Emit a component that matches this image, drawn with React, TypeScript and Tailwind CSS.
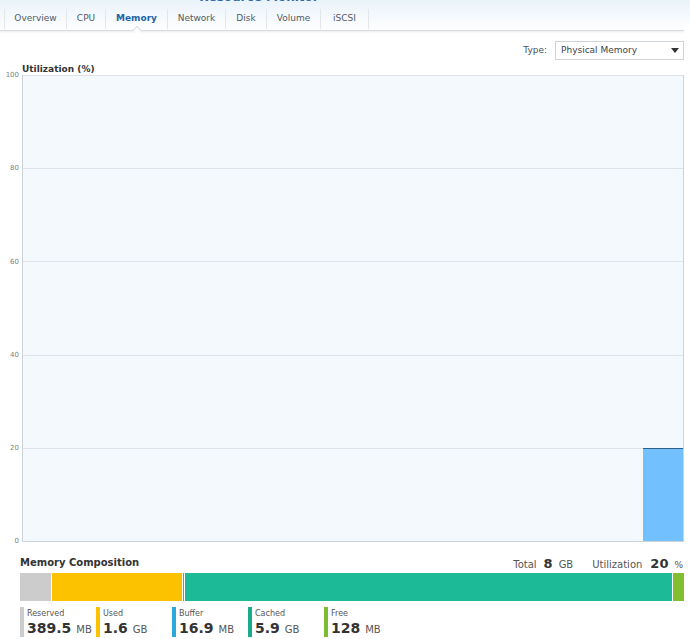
import React from "react";

const tabs = [
  { name: "Overview", w: "w-[63px]" },
  { name: "CPU", w: "w-[39px]" },
  { name: "Memory", w: "w-[62px]", active: true },
  { name: "Network", w: "w-[58px]" },
  { name: "Disk", w: "w-[41px]" },
  { name: "Volume", w: "w-[54px]" },
  { name: "iSCSI", w: "w-[48px]" },
];

const legend = [
  { label: "Reserved", value: "389.5", unit: "MB", color: "bg-[#cccccc]" },
  { label: "Used", value: "1.6", unit: "GB", color: "bg-[#fcc200]" },
  { label: "Buffer", value: "16.9", unit: "MB", color: "bg-[#2ea7dd]" },
  { label: "Cached", value: "5.9", unit: "GB", color: "bg-[#1aaa8c]" },
  { label: "Free", value: "128", unit: "MB", color: "bg-[#7ebd32]" },
];

const yLabels = [
  { v: "100", top: "top-[0px]" },
  { v: "80", top: "top-[93px]" },
  { v: "60", top: "top-[187px]" },
  { v: "40", top: "top-[280px]" },
  { v: "20", top: "top-[373px]" },
  { v: "0", top: "top-[466px]" },
];

export default function App() {
  return (
    <div className="w-[690px] h-[639px] overflow-hidden bg-white font-['DejaVu_Sans',sans-serif] text-[#4a4f55]">
      {/* header */}
      <div className="h-[31px] bg-gradient-to-b from-[#eaf2fa] to-white relative">
        <div className="h-[4px] overflow-hidden flex justify-center pr-[172px]">
          <div className="-mt-[10px] text-[12px] font-bold text-[#2a67a3] leading-[14px]">Resource Monitor</div>
        </div>
        <div className="flex pl-[4px] mt-[4px] h-[22px] items-center">
          {tabs.map((t, i) => (
            <div
              key={t.name}
              className={`${t.w} h-[20px] flex items-center justify-center text-[9px] border-r border-[#e3e7eb] ${i === 0 ? "border-l" : ""} ${t.active ? "text-[#1d64a6] font-bold" : "text-[#525a63]"}`}
            >
              {t.name}
            </div>
          ))}
        </div>
        <div className="absolute left-0 w-[684px] top-[30px] h-[1px] bg-[#d9dde1] shadow-[0_1px_2px_rgba(0,0,0,0.12)]" />
        <div className="absolute left-[134px] top-[27px] w-[6px] h-[6px] bg-white border-l border-t border-[#d9dde1] rotate-45" />
      </div>

      {/* type row */}
      <div className="flex justify-end items-center mt-[10px] pr-[6px] h-[19px]">
        <span className="text-[9px] text-[#4a4f55] mr-[8px]">Type:</span>
        <div className="w-[129px] h-[19px] border border-[#cfd4d9] bg-white flex items-center justify-between pl-[5px] pr-[4px]">
          <span className="text-[9px] text-[#3d434a]">Physical Memory</span>
          <svg width="8" height="5" viewBox="0 0 8 5"><path d="M0 0 L8 0 L4 5 Z" fill="#333" /></svg>
        </div>
      </div>

      {/* chart title */}
      <div className="pl-[22px] mt-[3px] h-[12px] text-[9px] font-bold text-[#333] leading-[12px]">Utilization (%)</div>

      {/* chart */}
      <div className="flex">
        <div className="w-[22px] relative h-[467px]">
          {yLabels.map((l) => (
            <div key={l.v} className={`absolute right-[3px] ${l.top} -translate-y-1/2 text-[7px] text-[#808080] leading-none`}>
              {l.v}
            </div>
          ))}
        </div>
        <div className="w-[662px] h-[467px] relative bg-[#f4f9fd] border-l border-b border-r border-[#cdd3d9] flex flex-col">
          {[0, 1, 2, 3, 4].map((i) => (
            <div key={i} className="h-[93.2px] border-t border-[#dde3e9]" />
          ))}
          <div className="absolute right-0 bottom-0 w-[40px] h-[93px] bg-[#72c1fe] border-t border-[#2d5f8c]" />
        </div>
      </div>

      {/* memory composition */}
      <div className="pl-[20px] pr-[7px] mt-[14px] flex items-end justify-between h-[14px]">
        <div className="text-[10px] font-bold text-[#333] leading-[14px]">Memory Composition</div>
        <div className="flex items-baseline text-[10px] text-[#555] leading-[14px] -mb-[2px]">
          <span>Total</span>
          <span className="ml-[7px] text-[13px] font-bold text-[#333]">8</span>
          <span className="ml-[6px]">GB</span>
          <span className="ml-[19px]">Utilization</span>
          <span className="ml-[8px] text-[13px] font-bold text-[#333]">20</span>
          <span className="ml-[6px] text-[9px]">%</span>
        </div>
      </div>
      <div className="mx-[20px] mt-[3px] w-[664px] h-[28px] flex gap-[1px] bg-white">
        <div className="w-[31px] bg-[#cccccc]" />
        <div className="w-[130px] bg-[#fcc200]" />
        <div className="w-[1px] bg-[#2ea7dd]" />
        <div className="flex-1 bg-[#1cba97]" />
        <div className="w-[11px] bg-[#80c030]" />
      </div>

      {/* legend */}
      <div className="flex pl-[20px] mt-[6px]">
        {legend.map((l) => (
          <div key={l.label} className="w-[76px] h-[30px] flex">
            <div className={`w-[4px] h-[30px] ${l.color}`} />
            <div className="pl-[3px] flex flex-col">
              <div className="text-[8px] text-[#555] leading-[10px] mt-[2px]">{l.label}</div>
              <div className="flex items-baseline leading-[18px]">
                <span className="text-[14px] font-bold text-[#333]">{l.value}</span>
                <span className="ml-[5px] text-[10px] text-[#555]">{l.unit}</span>
              </div>
            </div>
          </div>
        ))}
      </div>
    </div>
  );
}
